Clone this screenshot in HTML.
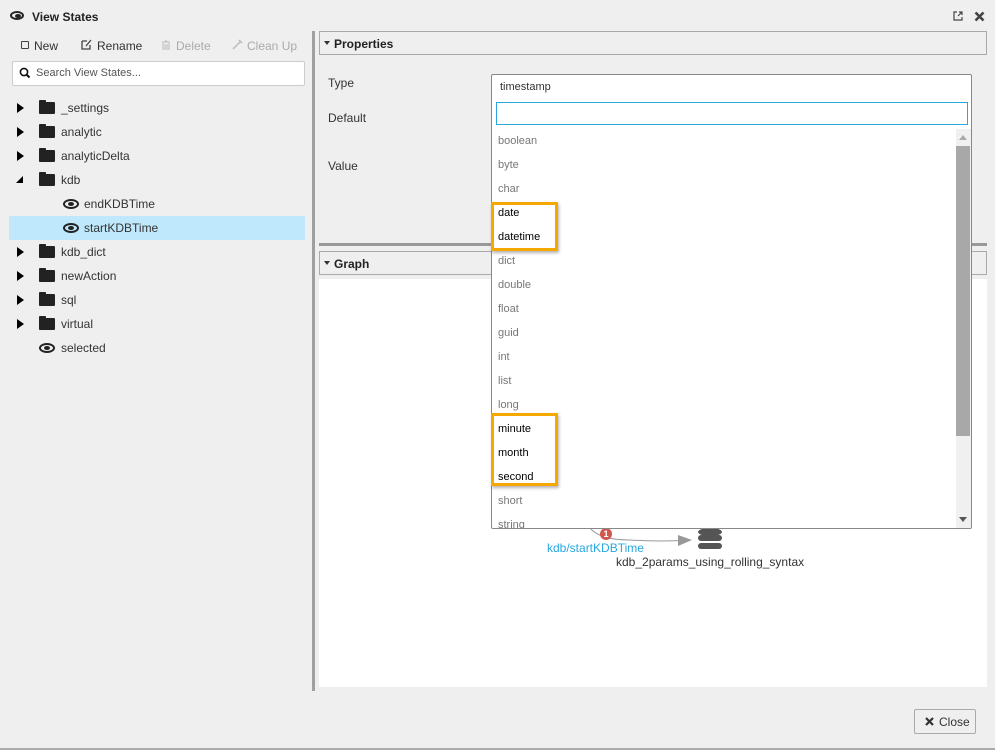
<!DOCTYPE html>
<html><head><meta charset="utf-8"><style>
*{box-sizing:border-box;margin:0;padding:0}
body{width:995px;height:750px;background:#efefef;font-family:"Liberation Sans",sans-serif;font-size:12px;color:#333;position:relative;overflow:hidden}
.a{position:absolute}
.row{position:absolute;left:9px;width:296px;height:24px;line-height:24px}
.tri{position:absolute;left:8px;top:7px;width:0;height:0;border-top:5px solid transparent;border-bottom:5px solid transparent;border-left:7px solid #000}
.fold{position:absolute;left:30px;top:6px;width:16px;height:12px;background:#222;border-radius:1px}
.fold:before{content:"";position:absolute;left:0;top:-2px;width:7px;height:3px;background:#222;border-radius:1px 1px 0 0}
.lbl{position:absolute;left:52px;font-size:12px;color:#333}
.eye{position:absolute;width:16px;height:10px;border:2px solid #222;border-radius:50%/50%}
.eye:after{content:"";position:absolute;left:3px;top:1px;width:6px;height:4px;background:#222;border-radius:50%}
.it{position:absolute;left:6px;height:24px;line-height:24px;font-size:11px;color:#777}
.it.b{color:#000}
</style></head><body>
<!-- title -->
<div class="eye" style="left:10px;top:11px;width:14px;height:9px"></div>
<div class="a" style="left:32px;top:10px;font-weight:bold;font-size:12px;color:#222">View States</div>
<svg class="a" style="left:953px;top:11px" width="10" height="10" viewBox="0 0 10 10"><path d="M4 1H1V9H9V6M5 5L9 1M6 1H9V4" stroke="#444" fill="none" stroke-width="1.2"/></svg>
<svg class="a" style="left:974px;top:11px" width="11" height="11" viewBox="0 0 11 11"><path d="M1.5 1.5L9.5 9.5M9.5 1.5L1.5 9.5" stroke="#444" stroke-width="2.6"/></svg>
<!-- toolbar -->
<div class="a" style="left:21px;top:41px;width:8px;height:8px;border:1px solid #444;border-radius:1px"></div>
<div class="a" style="left:34px;top:39px;color:#333">New</div>
<svg class="a" style="left:81px;top:39px" width="12" height="11"><path d="M1 2H6M1 2V10H9V6M5 7L10 1" stroke="#444" fill="none" stroke-width="1.3"/></svg>
<div class="a" style="left:97px;top:39px;color:#333">Rename</div>
<svg class="a" style="left:161px;top:40px" width="10" height="10"><path d="M1 2H9M4 1H6M2 3V9H8V3M4 4V8M6 4V8" stroke="#bbb" fill="none"/></svg>
<div class="a" style="left:176px;top:39px;color:#aaa">Delete</div>
<svg class="a" style="left:232px;top:39px" width="11" height="11"><path d="M1 10L8 3M7 1L10 4" stroke="#bbb" stroke-width="1.5"/></svg>
<div class="a" style="left:247px;top:39px;color:#aaa">Clean Up</div>
<!-- search -->
<div class="a" style="left:12px;top:61px;width:293px;height:25px;background:#fff;border:1px solid #ccc;border-radius:2px"></div>
<svg class="a" style="left:19px;top:67px" width="12" height="12"><circle cx="5" cy="5" r="3.6" stroke="#111" stroke-width="1.6" fill="none"/><path d="M7.5 7.5L10.5 10.5" stroke="#111" stroke-width="2"/></svg>
<div class="a" style="left:36px;top:67px;font-size:11px;color:#555">Search View States...</div>
<!-- tree -->
<div class="row" style="top:96px"><div class="tri"></div><div class="fold"></div><div class="lbl">_settings</div></div>
<div class="row" style="top:120px"><div class="tri"></div><div class="fold"></div><div class="lbl">analytic</div></div>
<div class="row" style="top:144px"><div class="tri"></div><div class="fold"></div><div class="lbl">analyticDelta</div></div>
<div class="row" style="top:168px"><div class="a" style="left:7px;top:8px;width:0;height:0;border-left:7px solid transparent;border-bottom:7px solid #000"></div><div class="fold"></div><div class="lbl">kdb</div></div>
<div class="row" style="top:192px"><div class="eye" style="left:54px;top:7px"></div><div class="lbl" style="left:75px">endKDBTime</div></div>
<div class="row" style="top:216px;background:#bfe8fc"><div class="eye" style="left:54px;top:7px"></div><div class="lbl" style="left:75px">startKDBTime</div></div>
<div class="row" style="top:240px"><div class="tri"></div><div class="fold"></div><div class="lbl">kdb_dict</div></div>
<div class="row" style="top:264px"><div class="tri"></div><div class="fold"></div><div class="lbl">newAction</div></div>
<div class="row" style="top:288px"><div class="tri"></div><div class="fold"></div><div class="lbl">sql</div></div>
<div class="row" style="top:312px"><div class="tri"></div><div class="fold"></div><div class="lbl">virtual</div></div>
<div class="row" style="top:336px"><div class="eye" style="left:30px;top:7px"></div><div class="lbl">selected</div></div>
<!-- divider -->
<div class="a" style="left:312px;top:31px;width:3px;height:660px;background:#a0a0a0"></div>
<!-- properties -->
<div class="a" style="left:319px;top:31px;width:668px;height:24px;border:1px solid #aaa"></div>
<div class="a" style="left:324px;top:41px;border-left:3px solid transparent;border-right:3px solid transparent;border-top:4px solid #333"></div>
<div class="a" style="left:334px;top:37px;font-weight:bold;color:#222">Properties</div>
<div class="a" style="left:328px;top:76px">Type</div>
<div class="a" style="left:328px;top:111px">Default</div>
<div class="a" style="left:328px;top:159px">Value</div>
<div class="a" style="left:319px;top:243px;width:668px;height:3px;background:#999"></div>
<!-- graph -->
<div class="a" style="left:319px;top:251px;width:668px;height:24px;border:1px solid #aaa"></div>
<div class="a" style="left:324px;top:261px;border-left:3px solid transparent;border-right:3px solid transparent;border-top:4px solid #333"></div>
<div class="a" style="left:334px;top:257px;font-weight:bold;color:#222">Graph</div>
<div class="a" style="left:319px;top:279px;width:668px;height:408px;background:#fff"></div>
<svg class="a" style="left:580px;top:520px" width="160" height="40"><path d="M10 8Q20 20 50 20Q80 22 110 20" stroke="#999" fill="none"/><path d="M98 15L112 20L98 26Z" fill="#999"/><circle cx="26" cy="14" r="6" fill="#d0584f"/><text x="26" y="17" font-size="9" fill="#fff" text-anchor="middle" font-family="Liberation Sans" font-weight="bold">1</text><g fill="#555"><ellipse cx="130" cy="12" rx="12" ry="4"/><rect x="118" y="15" width="24" height="6" rx="3"/><rect x="118" y="23" width="24" height="6" rx="3"/></g></svg>
<div class="a" style="left:547px;top:541px;color:#29a8e0">kdb/startKDBTime</div>
<div class="a" style="left:616px;top:555px;color:#333">kdb_2params_using_rolling_syntax</div>
<!-- dropdown -->
<div class="a" style="left:491px;top:74px;width:481px;height:455px;background:#fff;border:1px solid #888;border-radius:2px;overflow:hidden">
<div class="a" style="left:8px;top:6px;font-size:11px;color:#333">timestamp</div>
<div class="a" style="left:4px;top:27px;width:472px;height:23px;border:1px solid #29a8e0"></div>
<div class="a" style="left:0;top:54px;width:480px;height:400px">
<div class="it" style="top:0">boolean</div><div class="it" style="top:24px">byte</div><div class="it" style="top:48px">char</div>
<div class="it b" style="top:72px">date</div><div class="it b" style="top:96px">datetime</div>
<div class="it" style="top:120px">dict</div><div class="it" style="top:144px">double</div><div class="it" style="top:168px">float</div><div class="it" style="top:192px">guid</div><div class="it" style="top:216px">int</div><div class="it" style="top:240px">list</div><div class="it" style="top:264px">long</div>
<div class="it b" style="top:288px">minute</div><div class="it b" style="top:312px">month</div><div class="it b" style="top:336px">second</div>
<div class="it" style="top:360px">short</div><div class="it" style="top:384px">string</div>
<div class="a" style="left:464px;top:0;width:16px;height:400px;background:#f0f0f0"></div>
<div class="a" style="left:464px;top:17px;width:14px;height:290px;background:#a8a8a8"></div>
<div class="a" style="left:467px;top:6px;border-left:4px solid transparent;border-right:4px solid transparent;border-bottom:5px solid #aaa"></div>
<div class="a" style="left:467px;top:388px;border-left:4px solid transparent;border-right:4px solid transparent;border-top:5px solid #555"></div>
</div></div>
<div class="a" style="left:491px;top:202px;width:67px;height:49px;border:3px solid #f5a800;box-shadow:1px 2px 3px rgba(0,0,0,.3)"></div>
<div class="a" style="left:491px;top:413px;width:67px;height:73px;border:3px solid #f5a800;box-shadow:1px 2px 3px rgba(0,0,0,.3)"></div>
<!-- close -->
<div class="a" style="left:914px;top:709px;width:62px;height:25px;border:1px solid #aaa;border-radius:2px;background:#efefef"></div>
<svg class="a" style="left:925px;top:717px" width="9" height="9"><path d="M1 1L8 8M8 1L1 8" stroke="#333" stroke-width="2.2"/></svg>
<div class="a" style="left:939px;top:715px;color:#333">Close</div>
<div class="a" style="left:0;top:748px;width:995px;height:2px;background:#aaa"></div>
</body></html>
